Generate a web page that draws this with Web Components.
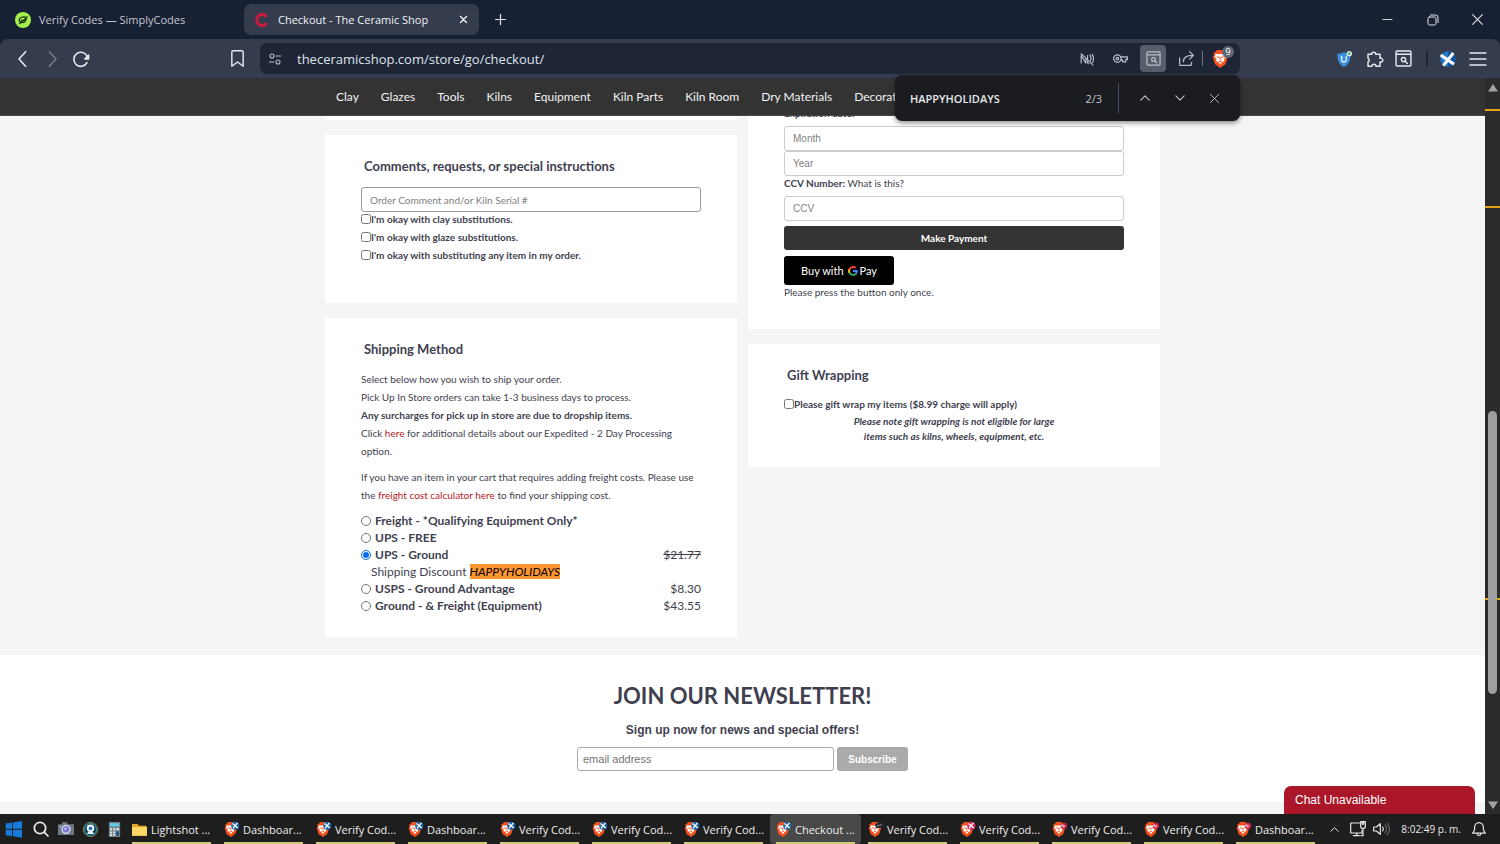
<!DOCTYPE html>
<html lang="en">
<head>
<meta charset="utf-8">
<title>Checkout - The Ceramic Shop</title>
<style>
    body {
        margin: 0;
        height: 100vh;
        display: flex;
        flex-direction: column;
        overflow: hidden;
        background: #182033;
        font-family: "Open Sans", "Noto Sans", sans-serif;
        font-size: 11px;
    }
</style>
</head>
<body>
<tab-strip></tab-strip>
<browser-toolbar></browser-toolbar>
<page-view></page-view>
<task-bar></task-bar>

<script>
const line = (w, body, view = 24) => `<svg viewBox="0 0 ${view} ${view}" fill="none" stroke="currentColor" stroke-width="${w}" stroke-linecap="round" stroke-linejoin="round">${body}</svg>`;
const fill = (body, view = 24) => `<svg viewBox="0 0 ${view} ${view}">${body}</svg>`;

const lion = `
    <path d="M4 3 6.500 0h9L18 3l2 .5-.4 3.500L21 9l-3 10-7 5-7-5L1 9l1.400-2L2 3.500z" fill="#f4511e"/>
    <path d="M5 5l4 .8L11 5l2 .8 4-.8 1.600 4-2.600 3 .5 2.500-3.500 2-2 3.200-2-3.200-3.500-2 .5-2.500L3.400 9z" fill="#fff"/>
    <path d="M6.500 9l3 1M15.500 9l-3 1M11 9v4M9 14.500l2 1.200 2-1.200" stroke="#f4511e" stroke-width="1.500" fill="none"/>`;

const badge = color => `<circle cx="18" cy="6" r="6.500" fill="${color}"/><path d="M13.500 2.500l8.500 7M21.500 1.500 14.500 10" stroke="#fff" stroke-width="2"/>`;

const icons = {
    simply: fill(`<circle cx="12" cy="12" r="12" fill="#a4f04c"/><path d="M17 8c-5-2-11 0-10.500 4.500C7 17 14 17 16 13l1-2.500-5 3-3-2M6 18 19 7" fill="none" stroke="#17320f" stroke-width="1.800" stroke-linejoin="round"/>`),
    ceramic: fill(`<path d="M19 7.500A8 8.500 0 1 0 19 16.500" fill="none" stroke="#c41a3b" stroke-width="5"/>`),
    close: line(3.500, '<path d="M4 4l16 16M20 4 4 20"/>'),
    thinClose: line(2, '<path d="M3 3l18 18M21 3 3 21"/>'),
    plus: line(2.600, '<path d="M12 1v22M1 12h22"/>'),
    minimize: line(2, '<path d="M2 12h20"/>'),
    restore: line(2, '<rect x="2" y="6" width="16" height="16" rx="3"/><path d="M7 2h10a5 5 0 0 1 5 5v10"/>'),
    back: line(2.400, '<path d="M16 1 6 12l10 11"/>'),
    forward: line(2.400, '<path d="M8 1l10 11L8 23"/>'),
    reload: line(2.400, '<path d="M21 17.500a10.500 10.500 0 1 1 .5-9"/><path d="M23.500 6v6h-6z" fill="currentColor" stroke-width="2"/>'),
    bookmark: line(2, '<path d="M4 3a2 2 0 0 1 2-2h12a2 2 0 0 1 2 2v20l-8-6-8 6z"/>'),
    tune: line(2.200, '<circle cx="6" cy="6" r="4"/><path d="M14 6h9M1 18h9"/><circle cx="18" cy="18" r="4"/>'),
    nfc: line(2, '<path d="M2 3l20 19M2 19V6l8 13V12M13 6v5M13 16v3l2 1M17 5c2 3 2.500 7 1 10M21 4c2.500 4 2.500 10 .5 14"/>'),
    key: line(2, '<circle cx="7" cy="12" r="6"/><circle cx="7" cy="12" r="2"/><path d="M12 9.500h11v4h-2.500v4h-5v-3H12"/>'),
    pageSearch: line(2, '<rect x="1.500" y="1.500" width="21" height="21" rx="1.500"/><path d="M2 6h20M14.500 16l3 3"/><circle cx="12" cy="13.500" r="3"/>'),
    share: line(2, '<path d="M1 11v10a2 2 0 0 0 2 2h15a2 2 0 0 0 2-2v-3M7 17c0-7 4-10 15-10M17 1l6 6-6 6"/>'),
    brave: fill(lion),
    uShield: fill('<path d="M12 1c3 2 6 3 10 3 0 9-2 16-10 20C4 20 2 13 2 4c4 0 7-1 10-3z" fill="#3b8ede"/><path d="M8.500 7v6a3.500 3.500 0 0 0 7 0V7" fill="none" stroke="#d8ecff" stroke-width="2.200"/><circle cx="20" cy="4" r="4" fill="#d6efe0"/><circle cx="20" cy="4" r="2" fill="#4db77c"/>'),
    puzzle: line(2.200, '<path d="M3 5h5.500a3 3 0 1 1 6 0H21v6a3 3 0 1 1 0 5.500V23h-6a3 3 0 0 0-6 0H3v-6.500a3 3 0 0 0 0-5.500z"/>'),
    xcircle: fill('<circle cx="12" cy="12" r="11.500" fill="#2277c8"/><path d="M12 .5a11.500 11.500 0 0 1 0 23z" fill="#1450a0"/><path d="M1 6l20 14M20 3 5 22" stroke="#fff" stroke-width="4.500"/>'),
    menu: line(2, '<path d="M0 3h24M0 12h24M0 21h24"/>'),
    up: line(2.600, '<path d="M2 17 12 7l10 10"/>'),
    down: line(2.600, '<path d="M2 7l10 10L22 7"/>'),
    google: fill(`
        <path d="M21.600 12.200c0-.7-.1-1.400-.2-2H12v3.900h5.400a4.600 4.600 0 0 1-2 3v2.500h3.200c1.900-1.700 3-4.300 3-7.400z" fill="#4285f4"/>
        <path d="M12 22c2.700 0 5-.9 6.600-2.400l-3.200-2.500c-.9.600-2 1-3.400 1a5.900 5.900 0 0 1-5.600-4.100H3.100v2.600A10 10 0 0 0 12 22z" fill="#34a853"/>
        <path d="M6.400 14a6 6 0 0 1 0-3.900V7.500H3.100a10 10 0 0 0 0 9z" fill="#fbbc04"/>
        <path d="M12 6c1.500 0 2.800.5 3.800 1.500l2.900-2.900A10 10 0 0 0 3.100 7.500l3.300 2.600A5.900 5.900 0 0 1 12 6z" fill="#ea4335"/>`),
    windows: fill('<path d="M1 3.500l9-1.300V11H1zM11.200 2 24 0v11H11.200zM1 12.500h9v8.900L1 20.100zM11.200 12.500H24V23.500l-12.800-1.800z" fill="#1779d8"/>'),
    search: line(2.600, '<circle cx="10.500" cy="10.500" r="8.500"/><path d="M17 17l5.500 5.500"/>'),
    camera: fill('<path d="M0 5h6V2h8v3h10v16H0z" fill="#71777f"/><circle cx="12" cy="12.500" r="7" fill="#d5dde8"/><circle cx="12" cy="12.500" r="5" fill="#7776d6"/><circle cx="11" cy="11.500" r="2.500" fill="#b6a0ee"/><circle cx="3.500" cy="8" r="1" fill="#eee"/>'),
    webcam: fill('<circle cx="12" cy="12" r="11.500" fill="#12394a" stroke="#c4a647" stroke-width="1"/><circle cx="12" cy="12" r="9.500" fill="none" stroke="#2aa0c8" stroke-width="1.500"/><circle cx="12" cy="10" r="6" fill="#fff"/><path d="M6 19l3-4h6l3 4z" fill="#e8f4fa"/><circle cx="12" cy="10" r="3" fill="#1a78b4"/>'),
    calc: fill('<rect x="3" y="0" width="18" height="24" fill="#75838f"/><rect x="5" y="2" width="14" height="5" fill="#5fd0ea"/><path d="M5 10h3v3H5zM10 10h3v3h-3zM15 10h4v3h-4zM5 15h3v3H5zM10 15h3v3h-3zM5 19h3v3H5zM10 19h3v3h-3z" fill="#e4edf2"/><path d="M15 15h4v7h-4z" fill="#1c4d80"/>'),
    folder: fill('<path d="M0 3h9l2 3h12v16H0z" fill="#e5a825"/><path d="M0 8h24v14H0z" fill="#ffd766"/>'),
    braveBlue: fill(lion + badge('#1f65a8')),
    braveBlack: fill(lion + '<path d="M11 6c2-7 9-7 13-3l-2 6-9 1z" fill="#26282d"/><path d="M13 7l9-3" stroke="#8a8e95" stroke-width="1.500"/>'),
    bravePink: fill(lion + badge('#dd2860')),
    braveRed: fill(lion + '<circle cx="19" cy="6" r="5" fill="#d22149"/><path d="M13 8l4-4 1 4 3-2" stroke="#fff" stroke-width="1.500" fill="none"/>'),
    network: line(1.800, '<path d="M15 3H1v15h17v-4M5 22h9M10 18v4"/><path d="M16 1h7v7a3.500 3.500 0 0 1-7 0zM18.500 1v4M20.500 1v4M19.500 12v10h-3"/>'),
    volume: line(1.800, '<path d="M1 9v6h4l6 5V4L5 9zM14.500 9a5 5 0 0 1 0 6"/><path d="M18 6a9 9 0 0 1 0 12M21.500 3.500a13 13 0 0 1 0 17" opacity=".35"/>'),
    bell: line(2, '<path d="M1 19h22c-2-2-3.500-4-3.500-7V9a7.500 8 0 0 0-15 0v3c0 3-1.500 5-3.500 7zM9 20a3 3 0 0 0 6 0"/>'),
};

function define(name, html, setup) {
    const template = document.createElement('template');
    template.innerHTML = html;

    customElements.define(name, class extends HTMLElement {
        constructor() {
            super();
            this.attachShadow({ mode: 'open' }).appendChild(template.content.cloneNode(true));
        }

        connectedCallback() {
            if (setup) setup(this, this.shadowRoot);
        }
    });
}

define('ui-icon', /* html */ `
    <style>
        :host { display: inline-flex; flex: none; width: 16px; height: 16px; }
        svg { width: 100%; height: 100%; overflow: visible; }
        span { display: flex; width: 100%; }
    </style>
    <span></span>
`, (el, root) => {
    const size = el.getAttribute('size');
    if (size) {
        el.style.width = size + 'px';
        el.style.height = size + 'px';
    }
    root.querySelector('span').innerHTML = icons[el.getAttribute('name')];
});

define('icon-button', /* html */ `
    <style>
        :host { display: inline-flex; flex: none; }
        button {
            display: flex;
            align-items: center;
            justify-content: center;
            width: 100%;
            height: 100%;
            padding: 0;
            border: 0;
            border-radius: 4px;
            background: var(--button-bg, none);
            color: inherit;
        }
    </style>
    <button type="button"></button>
`, (el, root) => {
    const button = root.querySelector('button');
    button.innerHTML = `<ui-icon name="${el.getAttribute('name')}" size="${el.getAttribute('size') || 16}"></ui-icon>`;
    button.setAttribute('aria-label', el.getAttribute('label'));
});

// ---------- browser ----------

define('browser-tab', /* html */ `
    <style>
        :host {
            display: flex;
            align-items: center;
            gap: 8px;
            box-sizing: border-box;
            width: 235px;
            height: 31px;
            padding: 0 10px;
            border-radius: 7px;
            color: #c3c8d2;
        }
        :host([active]) { background: #353c4e; color: #f0f2f6; }
        .title { flex: 1; white-space: nowrap; }
        icon-button { width: 12px; height: 20px; color: #fff; }
        :host(:not([active])) icon-button { display: none; }
    </style>
    <slot name="icon"></slot>
    <span class="title"><slot></slot></span>
    <icon-button name="close" size="9" label="Close tab"></icon-button>
`);

define('tab-strip', /* html */ `
    <style>
        :host { display: flex; align-items: center; height: 39px; flex: none; padding-left: 5px; color: #e2e5ea; }
        browser-tab + browser-tab { margin-left: 4px; }
        .new { width: 32px; height: 30px; margin-left: 5px; }
        .space { flex: 1; }
        .window { width: 45px; height: 39px; }
    </style>
    <browser-tab><ui-icon slot="icon" name="simply"></ui-icon>Verify Codes — SimplyCodes</browser-tab>
    <browser-tab active><ui-icon slot="icon" name="ceramic"></ui-icon>Checkout - The Ceramic Shop</browser-tab>
    <icon-button class="new" name="plus" size="11" label="New tab"></icon-button>
    <span class="space"></span>
    <icon-button class="window" name="minimize" size="11" label="Minimize"></icon-button>
    <icon-button class="window" name="restore" size="12" label="Restore"></icon-button>
    <icon-button class="window" name="thinClose" size="13" label="Close"></icon-button>
`);

define('browser-toolbar', /* html */ `
    <style>
        :host {
            display: flex;
            align-items: center;
            height: 39px;
            flex: none;
            box-sizing: border-box;
            padding: 0 8px;
            border-radius: 8px 8px 0 0;
            background: #353c4e;
            color: #e6e9ef;
        }
        icon-button { width: 29px; height: 27px; }
        .off { color: #737a89; }
        .bookmark { margin-left: 128px; }
        .address {
            display: flex;
            align-items: center;
            flex: 1;
            height: 31px;
            max-width: 980px;
            margin-left: 8px;
            border-radius: 7px;
            background: #1d2536;
            color: #b9bfca;
        }
        input {
            flex: 1;
            min-width: 0;
            margin-left: 8px;
            padding: 0;
            border: 0;
            background: none;
            color: #dfe3ea;
            font: 13px "Open Sans", "Noto Sans", sans-serif;
        }
        .actions { display: flex; align-items: center; gap: 7px; }
        .actions icon-button { width: 26px; }
        .on { --button-bg: #565d6b; }
        .rule { width: 1px; height: 15px; background: #6b7280; }
        .actions .rule { margin-left: -4px; }
        .shield { position: relative; display: flex; margin: 0 10px 0 2px; }
        .shield b {
            position: absolute;
            left: 10px;
            top: -4px;
            width: 12px;
            border-radius: 6px;
            background: #606675;
            color: #fff;
            font-size: 9px;
            font-weight: 400;
            line-height: 12px;
            text-align: center;
        }
        .extensions { display: flex; align-items: center; gap: 1px; margin-left: auto; }
        .extensions .rule { background: #1d2536; width: 2px; margin: 0 4px 0 7px; }
    </style>
    <icon-button name="back" size="16" label="Back"></icon-button>
    <icon-button class="off" name="forward" size="16" label="Forward"></icon-button>
    <icon-button name="reload" size="16" label="Reload"></icon-button>
    <icon-button class="bookmark" name="bookmark" size="17" label="Bookmark this page"></icon-button>
    <div class="address">
        <icon-button name="tune" size="12" label="Site information"></icon-button>
        <input aria-label="Address" value="theceramicshop.com/store/go/checkout/">
        <div class="actions">
            <icon-button name="nfc" size="14" label="Sensors blocked"></icon-button>
            <icon-button name="key" size="15" label="Passwords"></icon-button>
            <icon-button class="on" name="pageSearch" size="15" label="Find in page"></icon-button>
            <icon-button name="share" size="15" label="Share"></icon-button>
            <span class="rule"></span>
            <span class="shield"><ui-icon name="brave" size="18"></ui-icon><b>9</b></span>
        </div>
    </div>
    <div class="extensions">
        <icon-button name="uShield" size="16" label="VPN"></icon-button>
        <icon-button name="puzzle" size="16" label="Extensions"></icon-button>
        <icon-button name="pageSearch" size="17" label="Search this page"></icon-button>
        <span class="rule"></span>
        <icon-button name="xcircle" size="16" label="Profile"></icon-button>
        <icon-button name="menu" size="16" label="Menu"></icon-button>
    </div>
`);

define('find-bar', /* html */ `
    <style>
        :host {
            display: flex;
            align-items: center;
            box-sizing: border-box;
            width: 345px;
            height: 46px;
            padding: 0 8px 0 15px;
            border-radius: 7px;
            background: #1b1c20;
            box-shadow: 0 2px 5px rgba(0, 0, 0, .45);
            color: #c2c5ca;
        }
        input {
            flex: 1;
            min-width: 0;
            padding: 0;
            border: 0;
            background: none;
            color: #e6e8ec;
            font: 600 11px "Open Sans", "Noto Sans", sans-serif;
        }
        span { padding-right: 16px; border-right: 1px solid #3d4d64; line-height: 31px; }
        icon-button { width: 35px; height: 30px; }
        span + icon-button { margin-left: 8px; }
    </style>
    <input aria-label="Find" value="HAPPYHOLIDAYS">
    <span>2/3</span>
    <icon-button name="up" size="10" label="Previous"></icon-button>
    <icon-button name="down" size="10" label="Next"></icon-button>
    <icon-button name="thinClose" size="11" label="Close find bar"></icon-button>
`);

define('scroll-track', /* html */ `
    <style>
        :host { display: flex; flex-direction: column; width: 15px; flex: none; background: #2b2b2b; }
        .arrow { height: 19px; display: flex; align-items: center; justify-content: center; }
        svg { width: 10px; height: 8px; fill: #a3a3a3; }
        .lane { position: relative; flex: 1; }
        .thumb, .hit { position: absolute; }
        .thumb { left: 3px; width: 9px; top: 45%; height: 40.5%; border-radius: 5px; background: #9f9f9f; }
        .hit { left: 0; right: 0; height: 2px; background: #e5a217; }
    </style>
    <div class="arrow"><svg viewBox="0 0 10 8"><path d="M5 0l5 7.500H0z"/></svg></div>
    <div class="lane">
        <i class="hit" style="top: 1.7%"></i>
        <i class="hit" style="top: 15.6%"></i>
        <i class="hit" style="top: 71.8%"></i>
        <div class="thumb"></div>
    </div>
    <div class="arrow"><svg viewBox="0 0 10 8"><path d="M5 8 0 .5h10z"/></svg></div>
`);

// ---------- shop page ----------

define('site-nav', /* html */ `
    <style>
        :host { display: block; background: #333; box-shadow: inset 0 -1px #484848; }
        nav { display: flex; gap: 22px; box-sizing: border-box; max-width: 835px; margin: 0 auto; padding: 0 11px; }
        a { color: #f2f2f2; text-decoration: none; font-size: 12px; line-height: 38px; white-space: nowrap; }
    </style>
    <nav></nav>
`, (el, root) => {
    const pages = ['Clay', 'Glazes', 'Tools', 'Kilns', 'Equipment', 'Kiln Parts', 'Kiln Room', 'Dry Materials', 'Decorating'];
    root.querySelector('nav').innerHTML = pages.map(page => `<a href="#">${page}</a>`).join('');
});

define('shop-card', /* html */ `
    <style>
        :host { display: block; padding: 22px 36px 23px; background: #fff; }
        h2 { margin: 0 3px 12px; font-size: 13px; font-weight: 700; line-height: 18px; }
    </style>
    <h2></h2>
    <slot></slot>
`, (el, root) => {
    const h2 = root.querySelector('h2');
    if (el.hasAttribute('heading')) h2.textContent = el.getAttribute('heading');
    else h2.remove();
});

define('text-field', /* html */ `
    <style>
        :host { display: block; }
        input {
            display: block;
            box-sizing: border-box;
            width: 100%;
            height: 25px;
            padding: 0 8px;
            border: 1px solid var(--field-border, #ccc);
            border-radius: 3px;
            background: #fff;
            font: 10px var(--field-font, "Liberation Sans", Arial, sans-serif);
        }
        input::placeholder { color: #808080; opacity: 1; }
    </style>
    <input type="text">
`, (el, root) => {
    const input = root.querySelector('input');
    input.placeholder = el.getAttribute('placeholder');
    input.setAttribute('aria-label', el.getAttribute('placeholder'));
});

define('check-line', /* html */ `
    <style>
        :host { display: flex; align-items: center; font-weight: 700; line-height: 14px; }
        input { width: 10px; height: 10px; margin: 0; flex: none; }
    </style>
    <input type="checkbox" id="box"><label for="box"><slot></slot></label>
`);

define('shipping-options', /* html */ `
    <style>
        :host { display: grid; grid-auto-rows: 17px; margin-top: 8px; font-size: 12px; }
        .option { display: flex; align-items: center; line-height: 17px; }
        input { width: 10px; height: 10px; margin: 0 4px 0 0; flex: none; accent-color: #0b6ef0; }
        label { flex: 1; font-weight: 700; }
        .discount { padding-left: 10px; line-height: 17px; }
        mark { background: #ff9632; color: #000; }
    </style>
`, (el, root) => {
    const options = [
        ['freight', 'Freight - *Qualifying Equipment Only*', ''],
        ['ups-free', 'UPS - FREE', ''],
        ['ups', 'UPS - Ground', '<s>$21.77</s>'],
        ['usps', 'USPS - Ground Advantage', '$8.30'],
        ['ground', 'Ground - &amp; Freight (Equipment)', '$43.55'],
    ];
    options.forEach(([id, name, price]) => {
        const chosen = id === 'ups';
        root.innerHTML += `<div class="option">
            <input type="radio" name="shipping" id="${id}" ${chosen ? 'checked' : ''}>
            <label for="${id}">${name}</label><span>${price}</span>
        </div>`;
        if (chosen) {
            root.innerHTML += '<div class="discount">Shipping Discount <mark><em>HAPPYHOLIDAYS</em></mark></div>';
        }
    });
});

define('payment-form', /* html */ `
    <style>
        :host { display: block; line-height: 15px; }
        .label { margin-bottom: 5px; }
        a { color: inherit; text-decoration: none; }
        .pay {
            display: block;
            width: 100%;
            height: 24px;
            margin: 5px 0 6px;
            border: 0;
            border-radius: 3px;
            background: #333;
            color: #fff;
            font: 700 10px Lato, sans-serif;
        }
        .gpay {
            display: flex;
            align-items: center;
            justify-content: center;
            width: 110px;
            height: 29px;
            padding: 0;
            border: 0;
            border-radius: 3px;
            background: #000;
            color: #fff;
            font: 11px Lato, sans-serif;
        }
        .gpay ui-icon { margin: 0 1px 0 3px; }
        .note { margin-bottom: 6px; }
    </style>
    <div class="label"><b>Expiration date:</b></div>
    <text-field placeholder="Month"></text-field>
    <text-field placeholder="Year"></text-field>
    <div class="label"><b>CCV Number:</b> <a href="#">What is this?</a></div>
    <text-field placeholder="CCV"></text-field>
    <button class="pay" type="button">Make Payment</button>
    <button class="gpay" type="button">Buy with <ui-icon name="google" size="12"></ui-icon> Pay</button>
    <div class="note">Please press the button only once.</div>
`);

define('checkout-columns', /* html */ `
    <style>
        :host {
            display: grid;
            grid-template-columns: 1fr 1fr;
            column-gap: 11px;
            align-items: start;
            max-width: 835px;
            margin: -32px auto 18px;
        }
        .column { display: grid; row-gap: 15px; }
        .order { height: 14px; padding-bottom: 0; }
        .comments { padding-bottom: 41px; }
        .comments text-field { --field-border: #999; --field-font: Lato, sans-serif; }
        check-line + check-line { margin-top: 4px; }
        p { margin: 0 0 8px; line-height: 18px; }
        p a { color: #b5211f; text-decoration: none; }
        .gift check-line { line-height: 16px; }
        .gift p { width: 220px; margin: 2px auto 0; line-height: 15px; text-align: center; font-weight: 700; font-style: italic; }
    </style>
    <div class="column">
        <shop-card class="order"></shop-card>
        <shop-card class="comments" heading="Comments, requests, or special instructions">
            <text-field placeholder="Order Comment and/or Kiln Serial #"></text-field>
            <check-line>I'm okay with clay substitutions.</check-line>
            <check-line>I'm okay with glaze substitutions.</check-line>
            <check-line>I'm okay with substituting any item in my order.</check-line>
        </shop-card>
        <shop-card heading="Shipping Method">
            <p>Select below how you wish to ship your order.<br>
            Pick Up In Store orders can take 1-3 business days to process.<br>
            <b>Any surcharges for pick up in store are due to dropship items.</b><br>
            Click <a href="#">here</a> for additional details about our Expedited - 2 Day Processing<br>
            option.</p>
            <p>If you have an item in your cart that requires adding freight costs. Please use<br>
            the <a href="#">freight cost calculator here</a> to find your shipping cost.</p>
            <shipping-options></shipping-options>
        </shop-card>
    </div>
    <div class="column">
        <shop-card><payment-form></payment-form></shop-card>
        <shop-card class="gift" heading="Gift Wrapping">
            <check-line>Please gift wrap my items ($8.99 charge will apply)</check-line>
            <p>Please note gift wrapping is not eligible for large items such as kilns, wheels, equipment, etc.</p>
        </shop-card>
    </div>
`);

define('news-letter', /* html */ `
    <style>
        :host { display: block; padding: 26px 0 31px; background: #fff; text-align: center; }
        h1 { margin: 0 0 11px; font-size: 22px; font-weight: 700; line-height: 30px; }
        form { font-family: "Liberation Sans", Arial, sans-serif; }
        label { display: block; margin-bottom: 9px; font-size: 12px; font-weight: 700; line-height: 16px; }
        .row { display: flex; justify-content: center; gap: 3px; }
        input, button { box-sizing: border-box; height: 24px; border-radius: 3px; font-family: inherit; }
        input { width: 257px; padding: 0 5px; border: 1px solid #aaa; font-size: 11px; }
        input::placeholder { color: #757575; }
        button { width: 71px; padding: 0; border: 0; background: #aaa; color: #fff; font-size: 10px; font-weight: 700; }
    </style>
    <h1>JOIN OUR NEWSLETTER!</h1>
    <form>
        <label for="email">Sign up now for news and special offers!</label>
        <div class="row">
            <input type="email" id="email" placeholder="email address">
            <button type="button">Subscribe</button>
        </div>
    </form>
`);

define('page-view', /* html */ `
    <style>
        :host { position: relative; display: flex; flex: 1; min-height: 0; z-index: 1; }
        main {
            flex: 1;
            overflow: hidden;
            background: #f5f5f5;
            color: #3f3f50;
            font-family: Lato, sans-serif;
            font-size: 10px;
        }
        site-nav { position: relative; z-index: 1; }
        find-bar { position: absolute; right: 260px; top: -3px; z-index: 2; }
        .chat {
            position: absolute;
            right: 25px;
            bottom: 0;
            width: 191px;
            height: 28px;
            padding: 0 11px;
            border: 0;
            border-radius: 7px 7px 0 0;
            background: #ab1629;
            color: #fff;
            font: 12px "Liberation Sans", Arial, sans-serif;
            text-align: left;
        }
    </style>
    <main>
        <site-nav></site-nav>
        <checkout-columns></checkout-columns>
        <news-letter></news-letter>
    </main>
    <scroll-track></scroll-track>
    <find-bar></find-bar>
    <button class="chat" type="button">Chat Unavailable</button>
`);

// ---------- desktop ----------

define('task-item', /* html */ `
    <style>
        :host { display: block; width: 92px; flex: none; height: 30px; }
        button {
            display: flex;
            align-items: center;
            gap: 4px;
            box-sizing: border-box;
            width: 91px;
            height: 30px;
            padding: 0 6px;
            border: 0;
            border-radius: 4px;
            background: linear-gradient(#d3c97c, #d3c97c) 6px 28px / 79px 2px no-repeat;
            color: #eee;
            font: 11px "Open Sans", "Noto Sans", sans-serif;
            white-space: nowrap;
        }
        :host([active]) button { background-color: #484848; }
    </style>
    <button type="button"><slot name="icon"></slot><slot></slot></button>
`);

define('task-bar', /* html */ `
    <style>
        :host { display: flex; align-items: center; height: 30px; flex: none; background: #1e1e1e; color: #e8e8e8; }
        .pins { display: flex; align-items: center; width: 126px; }
        .pins icon-button { width: 24px; height: 30px; }
        .pins icon-button:nth-child(-n+2) { width: 27px; }
        .items { display: flex; }
        .tray { display: flex; align-items: center; margin-left: auto; padding-right: 10px; }
        .tray icon-button { width: 23px; height: 30px; }
        time { margin: 0 6px 0 9px; white-space: nowrap; font-size: 10px; }
    </style>
    <div class="pins">
        <icon-button name="windows" size="17" label="Start"></icon-button>
        <icon-button name="search" size="16" label="Search"></icon-button>
        <icon-button name="camera" size="16" label="Camera"></icon-button>
        <icon-button name="webcam" size="15" label="Webcam"></icon-button>
        <icon-button name="calc" size="15" label="Calculator"></icon-button>
    </div>
    <div class="items"></div>
    <div class="tray">
        <icon-button name="up" size="9" label="Show hidden icons"></icon-button>
        <icon-button name="network" size="16" label="Network"></icon-button>
        <icon-button name="volume" size="16" label="Volume"></icon-button>
        <time>8:02:49 p. m.</time>
        <icon-button name="bell" size="14" label="Notifications"></icon-button>
    </div>
`, (el, root) => {
    const items = [
        ['folder', 'Lightshot ...'],
        ['braveBlue', 'Dashboar...'],
        ['braveBlue', 'Verify Cod...'],
        ['braveBlue', 'Dashboar...'],
        ['braveBlue', 'Verify Cod...'],
        ['braveBlue', 'Verify Cod...'],
        ['braveBlue', 'Verify Cod...'],
        ['braveBlue', 'Checkout ...', 'active'],
        ['braveBlack', 'Verify Cod...'],
        ['bravePink', 'Verify Cod...'],
        ['braveRed', 'Verify Cod...'],
        ['braveRed', 'Verify Cod...'],
        ['braveRed', 'Dashboar...'],
    ];
    root.querySelector('.items').innerHTML = items.map(([icon, title, state = '']) =>
        `<task-item ${state}><ui-icon slot="icon" name="${icon}" size="15"></ui-icon>${title}</task-item>`
    ).join('');
});
</script>
</body>
</html>
